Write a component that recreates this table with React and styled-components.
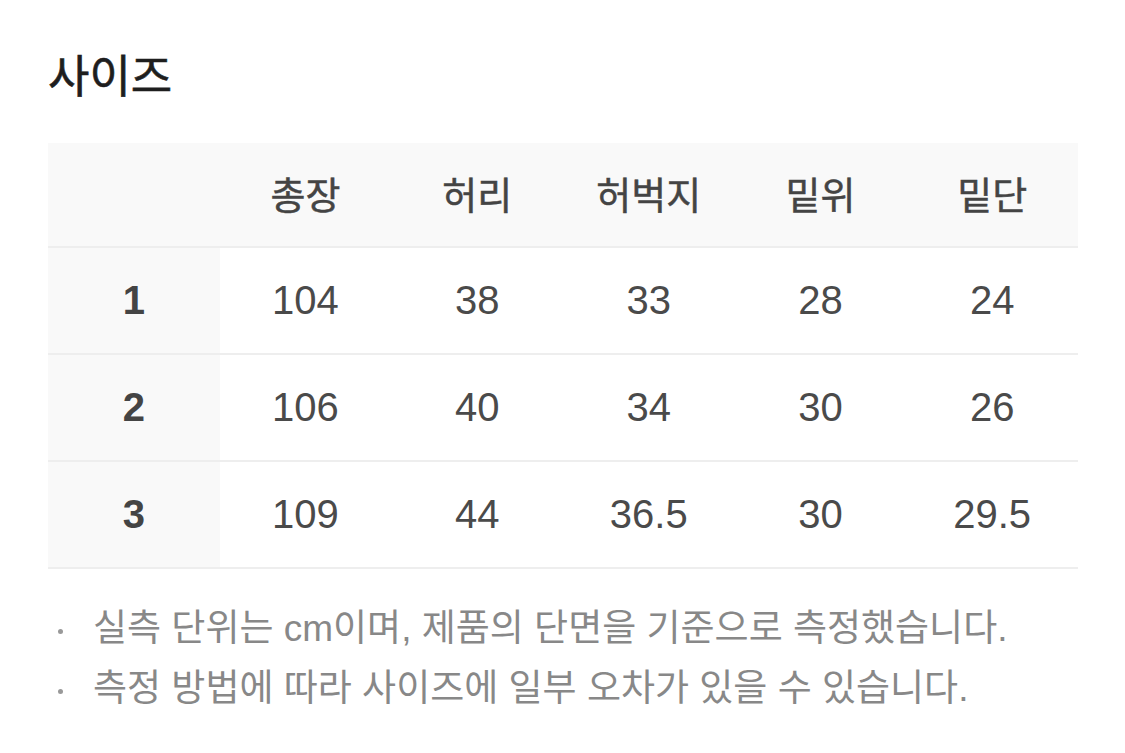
import styled, { createGlobalStyle } from "styled-components";

const GlobalStyle = createGlobalStyle`
  body {
    margin: 0;
    background: #fff;
    font-family: "Liberation Sans", "Noto Sans CJK KR", sans-serif;
  }
`;

const columns = ["총장", "허리", "허벅지", "밑위", "밑단"];

const rows = [
  { size: "1", values: ["104", "38", "33", "28", "24"] },
  { size: "2", values: ["106", "40", "34", "30", "26"] },
  { size: "3", values: ["109", "44", "36.5", "30", "29.5"] },
];

const notes = [
  "실측 단위는 cm이며, 제품의 단면을 기준으로 측정했습니다.",
  "측정 방법에 따라 사이즈에 일부 오차가 있을 수 있습니다.",
];

function App() {
  return (
    <Page>
      <GlobalStyle />
      <Title>사이즈</Title>
      <SizeTable>
        <thead>
          <HeadRow>
            <HeadCell />
            {columns.map((c) => (
              <HeadCell key={c}>{c}</HeadCell>
            ))}
          </HeadRow>
        </thead>
        <tbody>
          {rows.map((r) => (
            <BodyRow key={r.size}>
              <SizeCell>{r.size}</SizeCell>
              {r.values.map((v, i) => (
                <ValueCell key={i}>{v}</ValueCell>
              ))}
            </BodyRow>
          ))}
        </tbody>
      </SizeTable>
      <Notes>
        {notes.map((n) => (
          <Note key={n}>{n}</Note>
        ))}
      </Notes>
    </Page>
  );
}

export default App;

const Page = styled.div`
  padding: 52px 47px 0 48px;
`;

const Title = styled.h1`
  margin: 0;
  font-family: "Noto Sans CJK KR", sans-serif;
  font-size: 45px;
  line-height: 44px;
  font-weight: 400;
  color: #1e1e1e;
  -webkit-text-stroke: 0.6px #1e1e1e;
`;

const SizeTable = styled.table`
  margin-top: 47px;
  width: 1030px;
  table-layout: fixed;
  border-collapse: collapse;
  border-spacing: 0;
`;

const HeadRow = styled.tr`
  height: 104px;
  background: #f9f9f9;
  border-bottom: 2px solid #eeeeee;
`;

const HeadCell = styled.th`
  padding: 0 0 4px;
  text-align: center;
  font-family: "Noto Sans CJK KR", sans-serif;
  font-size: 38px;
  font-weight: 400;
  color: #444;
  -webkit-text-stroke: 0.5px #444;
`;

const BodyRow = styled.tr`
  height: 107px;
  border-bottom: 2px solid #eeeeee;
`;

const SizeCell = styled.td`
  padding: 0;
  background: #f9f9f9;
  text-align: center;
  font-size: 40px;
  font-weight: 700;
  color: #444;
`;

const ValueCell = styled.td`
  padding: 0;
  text-align: center;
  font-size: 40px;
  color: #4a4a4a;
`;

const Notes = styled.ul`
  margin: 30px 0 0;
  padding: 0;
  list-style: none;
`;

const Note = styled.li`
  position: relative;
  padding-left: 45px;
  font-family: "Liberation Sans", "Noto Sans CJK KR", sans-serif;
  font-size: 37px;
  line-height: 60px;
  color: #888;

  &::before {
    content: "";
    position: absolute;
    left: 10px;
    top: 30px;
    width: 5px;
    height: 5px;
    border-radius: 50%;
    background: #999;
  }
`;
